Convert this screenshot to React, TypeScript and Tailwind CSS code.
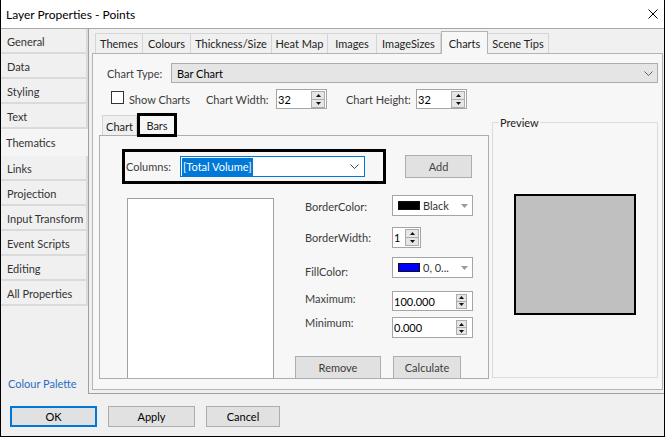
import React from "react";

function Chevron({ color = "#606060" }: { color?: string }) {
  return (
    <svg width="9" height="5" viewBox="0 0 9 5" className="shrink-0">
      <path d="M0.5 0.5L4.5 4.5L8.5 0.5" fill="none" stroke={color} strokeWidth="1" />
    </svg>
  );
}

function SpinButtons({ size }: { size: string }) {
  return (
    <div className={`flex shrink-0 flex-col border border-[#acacac] bg-[#e6e6e6] ${size}`}>
      <div className="flex flex-1 items-center justify-center border-b border-[#acacac]">
        <svg width="5" height="3" viewBox="0 0 5 3">
          <path d="M2.5 0L5 3H0Z" fill="#111" />
        </svg>
      </div>
      <div className="flex flex-1 items-center justify-center">
        <svg width="5" height="3" viewBox="0 0 5 3">
          <path d="M0 0H5L2.5 3Z" fill="#111" />
        </svg>
      </div>
    </div>
  );
}

function SpinField({ value, className, btn, pr }: { value: string; className: string; btn: string; pr: string }) {
  return (
    <div className={`flex shrink-0 items-center justify-between border border-[#a5a5a5] bg-white pl-[1px] ${pr} ${className}`}>
      <span className="text-black">{value}</span>
      <SpinButtons size={btn} />
    </div>
  );
}

function ColorCombo({ swatch, label }: { swatch: string; label: string }) {
  return (
    <div className="flex h-[21px] w-[81px] shrink-0 items-center border border-[#a5a5a5] bg-white pl-[5px] pr-[4px]">
      <div className={`h-[9px] w-[22px] shrink-0 border border-[#111] ${swatch}`} />
      <span className="ml-[3px] flex-1 text-[#333]">{label}</span>
      <svg width="7" height="4" viewBox="0 0 7 4" className="shrink-0">
        <path d="M0 0H7L3.5 4Z" fill="#9a9a9a" />
      </svg>
    </div>
  );
}

function FormRow({ label, pt, mt, children }: { label: string; pt: string; mt: string; children: React.ReactNode }) {
  return (
    <div className={`flex items-start ${mt}`}>
      <span className={`w-[87px] shrink-0 text-[#3c3c3c] ${pt}`}>{label}</span>
      {children}
    </div>
  );
}

const navTop = ["General", "Data", "Styling", "Text"];
const navBottom = ["Links", "Projection", "Input Transform", "Event Scripts", "Editing", "All Properties"];

const tabs = [
  { label: "Themes", w: "w-[48px]" },
  { label: "Colours", w: "w-[48px]" },
  { label: "Thickness/Size", w: "w-[81px]" },
  { label: "Heat Map", w: "w-[56px]" },
  { label: "Images", w: "w-[49px]" },
  { label: "ImageSizes", w: "w-[64px]" },
  { label: "Charts", w: "w-[47px]", selected: true },
  { label: "Scene Tips", w: "w-[61px]" },
];

function NavItem({ label }: { label: string }) {
  return (
    <div className="flex h-[25px] items-center border-b-2 border-r-2 border-[#dadada] bg-[#f0f0f0] pl-[6px] pt-[2px]">
      {label}
    </div>
  );
}

export default function App() {
  return (
    <div className="flex h-[437px] w-[665px] flex-col overflow-hidden border-x border-b border-black bg-[#f0f0f0] font-['Lato','Noto_Sans',sans-serif] text-[11px] leading-[15px] text-[#333]">
      {/* Title bar */}
      <div className="flex h-[29px] shrink-0 items-center justify-between border-b border-[#a8a8a8] bg-white pl-[5px] pr-[6px]">
        <span className="text-[12px] text-black">Layer Properties - Points</span>
        <svg width="10" height="10" viewBox="0 0 10 10">
          <path d="M0.5 0.5L9.5 9.5M9.5 0.5L0.5 9.5" stroke="#000" strokeWidth="1" />
        </svg>
      </div>

      {/* Body */}
      <div className="flex h-[365px] shrink-0">
        {/* Left nav */}
        <div className="flex w-[87px] shrink-0 flex-col">
          {navTop.map((l) => (
            <NavItem key={l} label={l} />
          ))}
          <div className="flex h-[27px] items-center bg-[#f5f5f5] pl-[5px]">Thematics</div>
          {navBottom.map((l) => (
            <NavItem key={l} label={l} />
          ))}
          <div className="mt-auto mb-[3px] pl-[7px] text-[#2a6cc4]">Colour Palette</div>
        </div>

        {/* Frame */}
        <div className="flex flex-1 flex-col border-b border-l border-[#a0a0a0] pt-[2px]">
          {/* Tab strip */}
          <div className="flex h-[22px] shrink-0 items-start pl-[6px]">
            {tabs.map((t, i) =>
              t.selected ? (
                <div
                  key={t.label}
                  className={`relative z-10 -mb-[1px] flex h-[23px] items-center justify-center border-x border-t border-[#b4b4b4] bg-[#f7f7f7] text-[#222] ${t.w}`}
                >
                  {t.label}
                </div>
              ) : (
                <div
                  key={t.label}
                  className={`mt-[2px] flex h-[20px] items-center justify-center border-t border-r border-[#d4d4d4] bg-[#f0f0f0] text-[#222] ${i === 0 ? "border-l" : ""} ${t.w}`}
                >
                  {t.label}
                </div>
              )
            )}
          </div>

          {/* Tab panel */}
          <div className="mb-[3px] ml-[3px] mr-[1px] flex flex-1 flex-col border border-[#b4b4b4] bg-[#f7f7f7]">
            {/* Chart type */}
            <div className="ml-[14px] mt-[9px] flex h-[20px] items-center">
              <span className="w-[64px] shrink-0 text-[#3c3c3c]">Chart Type:</span>
              <div className="flex h-[20px] w-[487px] items-center justify-between border border-[#acacac] bg-[#e5e5e5] pl-[5px] pr-[4px]">
                <span className="text-black">Bar Chart</span>
                <Chevron />
              </div>
            </div>

            {/* Show charts row */}
            <div className="ml-[18px] mt-[6px] flex h-[20px] items-center">
              <div className="mb-[3px] h-[13px] w-[13px] shrink-0 border border-[#333] bg-white" />
              <span className="ml-[5px] w-[77px] shrink-0 text-[#3c3c3c]">Show Charts</span>
              <span className="w-[70px] shrink-0 text-[#3c3c3c]">Chart Width:</span>
              <SpinField value="32" className="h-[20px] w-[51px]" btn="h-[17px] w-[14px]" pr="pr-[1px]" />
              <span className="ml-[19px] w-[70px] shrink-0 text-[#3c3c3c]">Chart Height:</span>
              <SpinField value="32" className="h-[20px] w-[51px]" btn="h-[17px] w-[14px]" pr="pr-[1px]" />
            </div>

            {/* Lower section */}
            <div className="ml-[6px] mt-[4px] flex items-start">
              {/* Sub tab control */}
              <div className="flex w-[390px] shrink-0 flex-col">
                <div className="flex h-[22px] items-start pl-[3px]">
                  <div className="mt-[2px] flex h-[20px] w-[35px] items-center justify-center border-x border-t border-[#d4d4d4] bg-[#f0f0f0] pt-[1px] text-[#222]">
                    Chart
                  </div>
                  <div className="relative z-10 -mb-[2px] flex h-[24px] w-[40px] items-center justify-center border-[3px] border-black bg-[#f7f7f7] text-[#222]">
                    Bars
                  </div>
                </div>
                <div className="h-[244px] overflow-hidden border border-[#adadad] bg-[#f7f7f7]">
                  {/* Row 1 */}
                  <div className="mt-[13px] flex items-start">
                    <div className="ml-[22px] flex h-[35px] w-[264px] shrink-0 items-center border-[3px] border-black pl-[1px]">
                      <span className="w-[54px] shrink-0 text-[#3c3c3c]">Columns:</span>
                      <div className="flex h-[21px] w-[185px] shrink-0 items-center justify-between border border-[#0078d7] bg-white pl-[1px] pr-[5px]">
                        <span className="bg-[#0078d7] px-[1px] leading-[18px] text-white">[Total Volume]</span>
                        <Chevron color="#444" />
                      </div>
                    </div>
                    <div className="ml-[19px] mt-[6px] flex h-[23px] w-[67px] shrink-0 items-center justify-center border border-[#adadad] bg-[#e1e1e1] text-[#444]">
                      Add
                    </div>
                  </div>

                  {/* Row 2 */}
                  <div className="mt-[11px] flex items-start">
                    <div className="ml-[27px] mt-[3px] h-[200px] w-[147px] shrink-0 border border-[#a0a0a0] bg-white" />
                    <div className="ml-[31px] flex flex-col">
                      <FormRow label="BorderColor:" pt="pt-[4px]" mt="mt-0">
                        <ColorCombo swatch="bg-black" label="Black" />
                      </FormRow>
                      <FormRow label="BorderWidth:" pt="pt-[3px]" mt="mt-[11px]">
                        <SpinField value="1" className="h-[21px] w-[29px]" btn="h-[17px] w-[14px]" pr="pr-[1px]" />
                      </FormRow>
                      <FormRow label="FillColor:" pt="pt-[7px]" mt="mt-[9px]">
                        <ColorCombo swatch="bg-[#0000ff]" label="0, 0..." />
                      </FormRow>
                      <FormRow label="Maximum:" pt="pt-0" mt="mt-[12px]">
                        <SpinField value="100.000" className="h-[20px] w-[81px]" btn="h-[15px] w-[11px]" pr="pr-[5px]" />
                      </FormRow>
                      <FormRow label="Minimum:" pt="-mt-[2px]" mt="mt-[6px]">
                        <SpinField value="0.000" className="h-[21px] w-[81px]" btn="h-[15px] w-[11px]" pr="pr-[5px]" />
                      </FormRow>
                      <div className="-ml-[10px] mt-[18px] flex">
                        <div className="flex h-[23px] w-[86px] items-center justify-center border border-[#adadad] bg-[#e1e1e1] text-[#3c3c3c]">
                          Remove
                        </div>
                        <div className="ml-[12px] flex h-[23px] w-[68px] items-center justify-center border border-[#adadad] bg-[#e1e1e1] text-[#3c3c3c]">
                          Calculate
                        </div>
                      </div>
                    </div>
                  </div>
                </div>
              </div>

              {/* Preview */}
              <fieldset className="ml-[3px] mt-[2px] h-[263px] w-[166px] shrink-0 border border-[#dcdcdc]">
                <legend className="ml-[6px] px-[1px] text-[#222]">Preview</legend>
                <div className="flex justify-center pt-[64px]">
                  <div className="h-[121px] w-[122px] border-2 border-black bg-[#c0c0c0]" />
                </div>
              </fieldset>
            </div>
          </div>
        </div>
      </div>

      {/* Bottom buttons */}
      <div className="flex flex-1 items-start pl-[9px] pt-[12px]">
        <div className="flex h-[21px] w-[87px] items-center justify-center border-2 border-[#0078d7] bg-[#e1e1e1] text-black">
          OK
        </div>
        <div className="ml-[11px] flex h-[21px] w-[87px] items-center justify-center border border-[#adadad] bg-[#e1e1e1] text-black">
          Apply
        </div>
        <div className="ml-[11px] flex h-[21px] w-[74px] items-center justify-center border border-[#adadad] bg-[#e1e1e1] text-black">
          Cancel
        </div>
      </div>
    </div>
  );
}
